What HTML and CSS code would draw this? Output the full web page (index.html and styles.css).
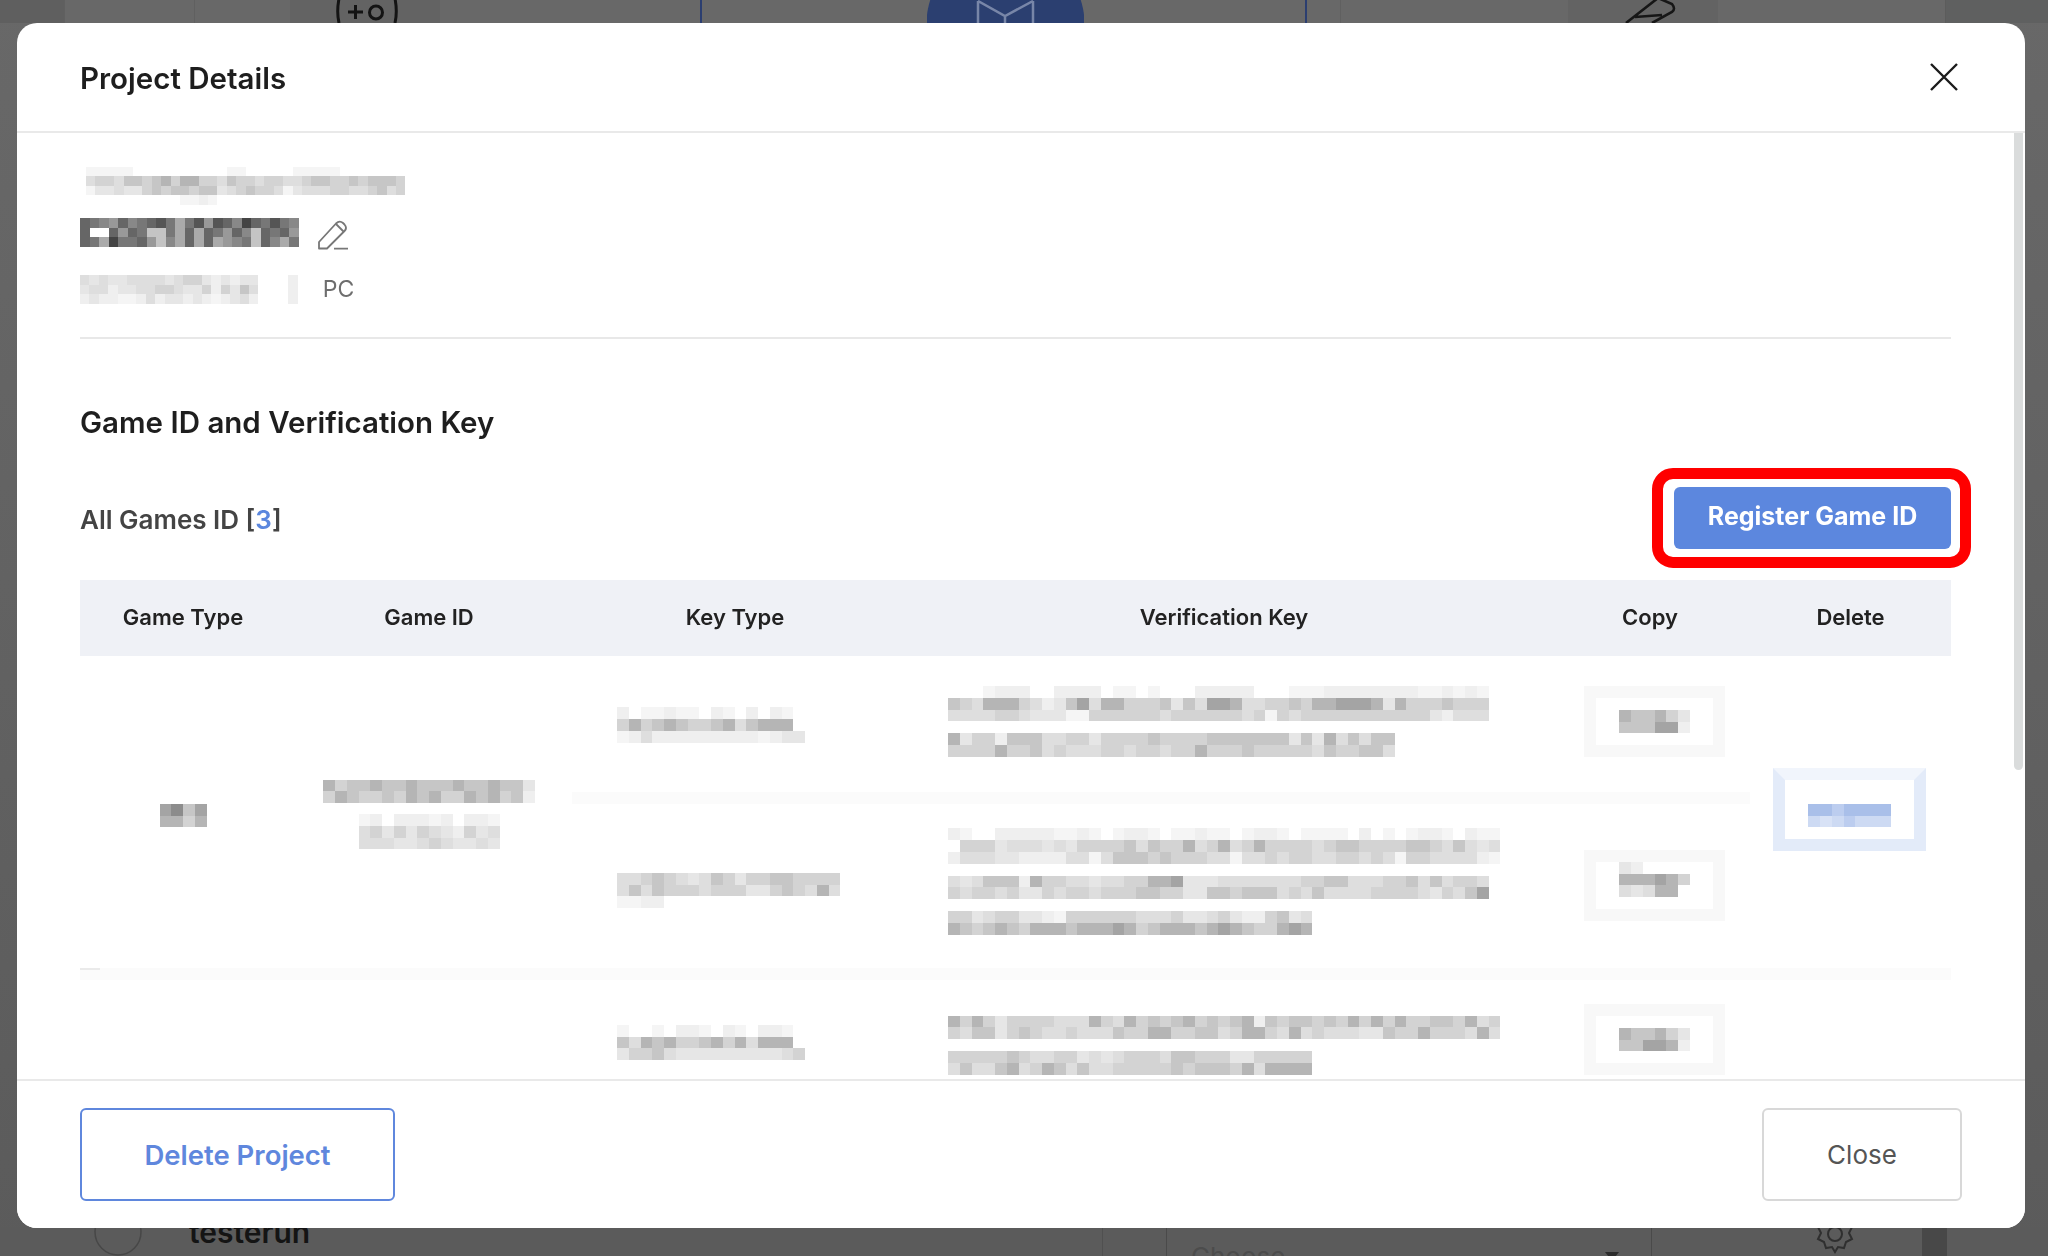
FILE: index.html
```html
<!DOCTYPE html>
<html lang="en">
<head>
<meta charset="utf-8">
<title>Project Details</title>
<link rel="stylesheet" href="styles.css">
</head>
<body>
<div class="page">
  <div class="top-strip">
    <div class="seg seg-a"></div>
    <div class="seg seg-b"></div>
    <div class="seg seg-c"></div>
    <div class="seg seg-d">
      <svg class="plus-icon" width="64" height="23" viewBox="0 0 64 23" aria-hidden="true">
        <path d="M5 -6Q1 10 4 23M59 -6Q63 10 60 23M13 12H28M20.500 5V19" fill="none" stroke="#141414" stroke-width="3"/>
        <ellipse cx="41" cy="12.500" rx="6.500" ry="6.500" fill="none" stroke="#141414" stroke-width="3"/>
      </svg>
    </div>
    <div class="seg seg-e"></div>
    <div class="seg seg-f"></div>
    <svg class="hero-icon" width="157" height="23" viewBox="0 0 157 23" aria-hidden="true">
      <circle cx="78.500" cy="24" r="79" fill="#2b3f70"/>
      <path d="M51 1L78 16L106 1M51 1V23M106 1V23M78 16V23" fill="none" stroke="#7886a8" stroke-width="2.500"/>
    </svg>
    <div class="seg seg-g"></div>
    <div class="seg seg-h"></div>
    <div class="seg seg-i"></div>
    <div class="seg seg-j">
      <svg class="pen-icon" width="52" height="23" viewBox="0 0 52 23" aria-hidden="true">
        <path d="M1 23L33 -2M33 -2L47 4Q51 9 47 12L27 23M10 17L37 15" fill="none" stroke="#161616" stroke-width="2.600"/>
      </svg>
    </div>
    <div class="seg seg-k"></div>
    <div class="seg seg-l"></div>
  </div>

  <div class="middle"></div>

  <div class="bottom-strip">
    <svg class="user-circle" width="48" height="29" viewBox="0 0 48 29" aria-hidden="true">
      <circle cx="24" cy="5" r="23" fill="none" stroke="#474747" stroke-width="1.500"/>
    </svg>
    <span class="user-name">testerun</span>
    <div class="sep-cell"></div>
    <div class="select-box"><span class="select-text">Choose</span><span class="select-arrow"></span></div>
    <svg class="gear-icon" width="40" height="29" viewBox="0 0 40 29" aria-hidden="true">
      <circle cx="20" cy="7" r="7" fill="none" stroke="#2f2f2f" stroke-width="2"/>
      <path d="M3 0L6 6L3 12L9 15L11 21L17 20L20 25L23 20L29 21L31 15L37 12L34 6L37 0" fill="none" stroke="#2f2f2f" stroke-width="2"/>
    </svg>
    <div class="dark-bar"></div>
  </div>

  <section class="modal">
    <header class="modal-header">
      <h1 class="modal-title">Project Details</h1>
      <svg class="close-icon" width="28" height="28" viewBox="0 0 28 28" aria-hidden="true">
        <path d="M1 1L27 27M27 1L1 27" fill="none" stroke="#1b1b1b" stroke-width="2.400"/>
      </svg>
    </header>

    <div class="modal-body">
      <div class="project-info">
        <div class="mosaic small shifted" data-rows="1111100000 0000011000 0011111000 000000|4554665675 7755465545 5445665565 6665|1334335656 6566345655 4134445544 5645|0000000000 1121000000 0000000000 0000"></div>
        <div class="name-row">
          <div class="mosaic small dark" data-rows="7654756786 3684875976 865|7007476226 3737647527 674|7639667425 3737345627 536"></div>
          <svg class="pencil-icon" width="32" height="30" viewBox="0 0 32 30" aria-hidden="true">
            <path d="M2 22L19 3.500Q22.500 0 26 3L27.500 4.500Q30.500 8 27.500 11L10 28.500H2Z" fill="none" stroke="#777" stroke-width="1.800" stroke-linejoin="round"/>
            <path d="M19 4L27 12M17 28.700H31" fill="none" stroke="#777" stroke-width="1.800"/>
          </svg>
        </div>
        <div class="meta-row">
          <div class="mosaic small" data-rows="4343344443 4553232 33|3442334455 4335253 64|2322112423 3232123 42"></div>
          <div class="mosaic small meta-divider" data-rows="2|2|2"></div>
          <span class="meta-platform">PC</span>
        </div>
      </div>

      <h2 class="section-title">Game ID and Verification Key</h2>

      <div class="toolbar">
        <span class="count-label">All Games ID [<b class="count-num">3</b>]</span>
        <button class="btn-register" type="button">Register Game ID</button>
      </div>

      <div class="table">
        <div class="table-head">
          <span>Game Type</span>
          <span>Game ID</span>
          <span>Key Type</span>
          <span>Verification Key</span>
          <span>Copy</span>
          <span>Delete</span>
        </div>
        <div class="table-body">
          <div class="cell-type"><div class="mosaic" data-rows="8968|7757"></div></div>
          <div class="cell-id">
            <div class="mosaic" data-rows="7566766766 67667663|5765565767 55767562"></div>
            <div class="mosaic" data-rows="1202221202 21|4535354325 34|4443345433 43"></div>
          </div>

          <div class="cell-key row-1 key-1"><div class="mosaic" data-rows="2011211021 020210|5756765567 467770|1242222222 221233"></div></div>
          <div class="cell-ver row-1 ver-1">
            <div class="mosaic" data-rows="0001222002 2220110100 0222220001 1122222222 112121|6547775423 6847755563 6488744556 5778887375 556555|4444554333 1155555545 5555545154 5555555555 532444"></div>
            <div class="mosaic" data-rows="7355266644 5535555655 5566666663 63746466|5555755645 4445545545 5755565555 54655664"></div>
          </div>
          <div class="cell-copy row-1 ver-0"><div class="copy-btn"><div class="mosaic" data-rows="766753|666882"></div></div></div>

          <div class="sep sep-inner"></div>

          <div class="cell-key row-2 key-2"><div class="mosaic" data-rows="4456543465 355665555|4646555455 533565474|1122000000 000000000"></div></div>
          <div class="cell-ver row-2 ver-2">
            <div class="mosaic" data-rows="2100222221 1210122101 1211012210 1111020101 2210211|0555344434 3555564655 7457457555 5456655556 6546434|2444332222 4414666565 5544144545 5445545415 5444421"></div>
            <div class="mosaic" data-rows="4346662755 4434455778 3334444444 5566444556 4645540|5455453354 5545556655 3366566645 4644445555 4354680"></div>
            <div class="mosaic" data-rows="5534553321 5555554445 3345322563 4|7656765777 6777875677 7678765578 7"></div>
          </div>
          <div class="cell-copy row-2"><div class="copy-btn copy-lift"><div class="mosaic" data-rows="320000|777875|434770"></div></div></div>

          <div class="cell-delete">
            <div class="delete-btn"><div class="mosaic blue" data-rows="5545555|3234333"></div></div>
          </div>

          <div class="sep sep-full"></div>

          <div class="cell-key row-3 key-3"><div class="mosaic" data-rows="1001022102 102210|6476755675 747770|3556433333 333345"></div></div>
          <div class="cell-ver row-3 ver-top">
            <div class="mosaic" data-rows="7575355554 4475475656 7565672656 6565757575 5665745|5466356544 5444655775 5664577547 4544433655 7555474"></div>
            <div class="mosaic" data-rows="5555565445 5343455546 6555335555 5|4644674576 4644555556 5666574777 7"></div>
          </div>
          <div class="cell-copy row-3"><div class="copy-btn"><div class="mosaic" data-rows="766753|668872"></div></div></div>
        </div>
      </div>
    </div>

    <div class="scrollbar"></div>

    <footer class="modal-footer">
      <button class="btn-delete" type="button">Delete Project</button>
      <button class="btn-close" type="button">Close</button>
    </footer>
  </section>
</div>
<script src="mosaic.js"></script>
</body>
</html>
```
FILE: styles.css
```css
* { box-sizing: border-box; }
html, body { margin: 0; padding: 0; }
body {
  width: 2048px;
  height: 1256px;
  overflow: hidden;
  font-family: "Inter", "Liberation Sans", sans-serif;
  background: #5f5f5f;
}
button { font-family: inherit; cursor: pointer; }

.page {
  position: relative;
  width: 2048px;
  height: 1256px;
  display: grid;
  grid-template-rows: 23px 1fr 29px;
  background: linear-gradient(180deg, #686868 0%, #5b5b5b 100%);
}

/* dimmed page behind the dialog */
.top-strip { display: flex; height: 23px; overflow: hidden; background: #686868; }
.seg { flex: none; height: 23px; }
.seg-a { width: 65px; background: #5f5f5f; border-right: 1px solid #606060; }
.seg-b { width: 130px; border-right: 1px solid #606060; }
.seg-c { width: 95px; }
.seg-d { width: 150px; background: #636363; padding-left: 45px; }
.seg-e { width: 262px; border-right: 2px solid #2b3e70; }
.seg-f { width: 225px; }
.hero-icon { flex: none; display: block; }
.seg-g { width: 223px; border-right: 2px solid #2b3e70; }
.seg-h { width: 34px; border-right: 1px solid #606060; }
.seg-i { width: 227px; }
.seg-j { width: 150px; background: #636363; padding-left: 57px; }
.seg-k { width: 228px; border-right: 1px solid #5c5c5c; }
.seg-l { width: 102px; background: #5f6060; }
.plus-icon, .pen-icon { display: block; }

.middle { min-height: 0; }

.bottom-strip {
  display: flex;
  align-items: flex-start;
  height: 29px;
  overflow: hidden;
  background: #5b5b5b;
}
.user-circle { flex: none; margin-left: 94px; display: block; }
.user-name {
  flex: none;
  width: 913px;
  margin-left: 47px;
  margin-top: -13px;
  font-size: 30px;
  line-height: 36px;
  font-weight: 600;
  color: #141414;
}
.sep-cell { flex: none; width: 64px; height: 29px; border-left: 1px solid #505050; }
.select-box {
  flex: none;
  width: 486px;
  height: 40px;
  padding: 13px 32px 0 24px;
  display: flex;
  justify-content: space-between;
  border: 1px solid #4a4a4a;
}
.select-text { font-size: 26px; line-height: 32px; color: #4c4c4c; }
.select-arrow {
  margin-top: 11px;
  width: 0;
  height: 0;
  border-left: 7px solid transparent;
  border-right: 7px solid transparent;
  border-top: 9px solid #2c2c2c;
}
.gear-icon { flex: none; margin-left: 163px; display: block; }
.dark-bar { flex: none; width: 25px; height: 29px; margin-left: 67px; background: #484848; }

/* dialog */
.modal {
  position: absolute;
  left: 17px;
  top: 23px;
  width: 2008px;
  height: 1205px;
  display: flex;
  flex-direction: column;
  background: #fff;
  border-radius: 20px;
  overflow: hidden;
  filter: blur(0.45px);
}
.modal-header {
  flex: none;
  height: 110px;
  padding: 2px 67px 0 63px;
  display: flex;
  align-items: center;
  justify-content: space-between;
  border-bottom: 2px solid #e9e9e9;
}
.modal-title { margin: 0; font-size: 29.500px; line-height: 36px; font-weight: 600; color: #1e1e1e; }
.close-icon { display: block; margin-top: -2px; }

.modal-body {
  flex: 1;
  min-height: 0;
  overflow: hidden;
  padding: 34px 74px 0 63px;
}
.scrollbar {
  position: absolute;
  left: 1997px;
  top: 110px;
  width: 9px;
  height: 637px;
  background: #dadcdc;
  border-radius: 0 0 5px 5px;
}

.shifted { margin-left: 6px; }
.name-row { display: flex; align-items: center; gap: 18px; margin-top: 14px; height: 28px; }
.pencil-icon { display: block; flex: none; margin-top: 4px; }
.meta-row { display: flex; align-items: center; margin-top: 29px; height: 28px; }
.meta-divider { margin-left: 30px; }
.meta-platform { margin-left: 25px; margin-top: -2px; font-size: 23px; line-height: 28px; color: #6e6e6e; }
.project-info { padding-bottom: 33px; border-bottom: 2px solid #e8e8e8; }

.section-title {
  margin: 65px 0 0;
  font-size: 29.500px;
  line-height: 36px;
  font-weight: 600;
  color: #1e1e1e;
}

.toolbar {
  margin-top: 47px;
  display: flex;
  justify-content: space-between;
  align-items: center;
}
.count-label { margin-top: 4px; font-size: 26px; line-height: 32px; font-weight: 600; color: #444; }
.count-num { font-weight: 600; color: #5b87de; }

.btn-register {
  position: relative;
  width: 277px;
  height: 62px;
  padding: 0 0 3px;
  border: 0;
  border-radius: 6px;
  background: #5c87de;
  color: #fff;
  font-size: 25px;
  font-weight: 700;
}
.btn-register::after {
  content: "";
  position: absolute;
  inset: -19px -20px -19px -22px;
  border: 11.500px solid #f00;
  border-radius: 21px;
}

.table { margin-top: 31px; }
.table-head {
  display: grid;
  grid-template-columns: 206px 286px 326px 652px 200px 201px;
  height: 76px;
  padding-bottom: 2px;
  align-items: center;
  background: #eff1f6;
  text-align: center;
  font-size: 22px;
  font-weight: 600;
  color: #222;
}
.table-body {
  display: grid;
  grid-template-columns: 206px 286px 326px 652px 200px 201px;
  grid-template-rows: 136px 12px 164px 12px 120px;
}
.cell-type, .cell-id {
  grid-row: 1 / 4;
  display: flex;
  flex-direction: column;
  align-items: center;
  justify-content: center;
  gap: 11px;
}
.cell-type { grid-column: 1; padding-top: 8px; }
.cell-id { grid-column: 2; padding-top: 6px; }
.cell-key {
  grid-column: 3;
  padding-left: 45px;
  display: flex;
  align-items: center;
}
.key-1 { padding-top: 3px; }
.key-2 { padding-top: 10px; }
.key-3 { padding-top: 6px; }
.cell-ver {
  grid-column: 4;
  padding-left: 50px;
  display: flex;
  flex-direction: column;
  justify-content: center;
  gap: 12px;
}
.ver-0, .ver-1 { padding-bottom: 4px; }
.ver-2 { padding-bottom: 8px; }
.ver-top { justify-content: flex-start; padding-top: 36px; }
.cell-copy {
  grid-column: 5;
  padding-left: 34px;
  display: flex;
  align-items: center;
}
.row-1 { grid-row: 1; }
.row-2 { grid-row: 3; }
.row-3 { grid-row: 5; }
.cell-delete {
  grid-column: 6;
  grid-row: 1 / 4;
  padding-left: 23px;
  padding-bottom: 4px;
  display: flex;
  align-items: center;
}
.sep { background: #fbfbfb; }
.sep-inner { grid-column: 3 / 6; grid-row: 2; }
.sep-full { grid-column: 1 / 7; grid-row: 4; position: relative; }
.sep-full::before {
  content: "";
  position: absolute;
  left: 0;
  top: 0;
  width: 20px;
  height: 2px;
  background: #eaeaea;
}
.copy-btn {
  width: 141px;
  height: 71px;
  display: flex;
  align-items: center;
  justify-content: center;
  border: 12px solid #f8f8f8;
}
.copy-lift { padding-bottom: 12px; }
.delete-btn {
  width: 153px;
  height: 83px;
  padding-top: 12px;
  display: flex;
  align-items: center;
  justify-content: center;
  border: 12px solid #e3ebf9;
  border-top-color: #f1f5fc;
}

.modal-footer {
  flex: none;
  height: 149px;
  padding: 27px 63px;
  display: flex;
  justify-content: space-between;
  border-top: 2px solid #e9e9e9;
  background: #fff;
  position: relative;
}
.btn-delete {
  width: 315px;
  height: 93px;
  border: 2px solid #5f87dd;
  border-radius: 6px;
  background: #fff;
  color: #5f87dd;
  font-size: 27.500px;
  font-weight: 600;
}
.btn-close {
  width: 200px;
  height: 93px;
  border: 2px solid #d8d8d8;
  border-radius: 6px;
  background: #fff;
  color: #555;
  font-size: 26px;
  font-weight: 400;
}

/* pixelated (redacted) text */
.mosaic { flex: none; display: flex; flex-direction: column; width: max-content; }
.m-row { display: flex; height: 11.750px; }
.m-row i { flex: none; width: 11.750px; height: 100%; }
.small .m-row { height: 9.400px; }
.small .m-row i { width: 9.400px; }
.small.dark .m-row i { width: 9.520px; }
.c0 { background: transparent; }
.c1 { background: #f5f5f5; }
.c2 { background: #efefef; }
.c3 { background: #e6e6e6; }
.c4 { background: #dedede; }
.c5 { background: #d3d3d3; }
.c6 { background: #c6c6c6; }
.c7 { background: #b5b5b5; }
.c8 { background: #a4a4a4; }
.c9 { background: #8c8c8c; }
.dark .c0 { background: #fff; }
.dark .c1 { background: #dddddd; }
.dark .c2 { background: #c4c4c4; }
.dark .c3 { background: #aaaaaa; }
.dark .c4 { background: #999999; }
.dark .c5 { background: #888888; }
.dark .c6 { background: #777777; }
.dark .c7 { background: #666666; }
.dark .c8 { background: #555555; }
.dark .c9 { background: #444444; }
.blue .c2 { background: #d8e2f6; }
.blue .c3 { background: #cddaf3; }
.blue .c4 { background: #bccdef; }
.blue .c5 { background: #a9bfe9; }
```
FILE: mosaic.js
```js
document.querySelectorAll('.mosaic').forEach(function (el) {
  el.dataset.rows.split('|').forEach(function (row) {
    var line = document.createElement('div');
    line.className = 'm-row';
    row.replace(/\s/g, '').split('').forEach(function (d) {
      var cell = document.createElement('i');
      cell.className = 'c' + d;
      line.appendChild(cell);
    });
    el.appendChild(line);
  });
});
```
